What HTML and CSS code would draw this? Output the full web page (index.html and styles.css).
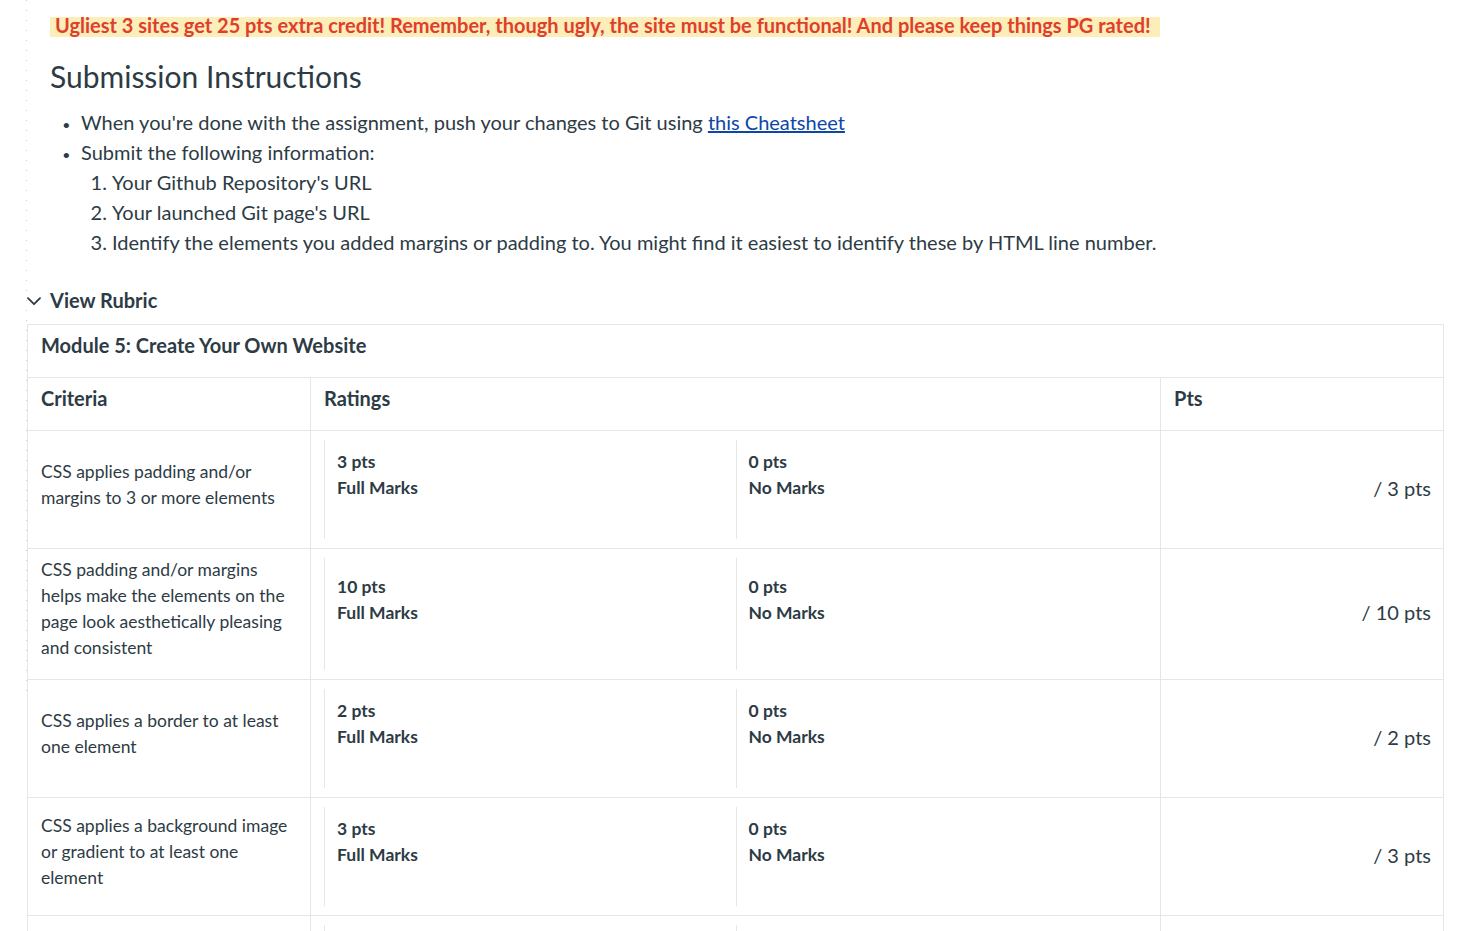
FILE: index.html
```html
<!DOCTYPE html>
<html lang="en">
<head>
<meta charset="utf-8">
<title>Module 5: Create Your Own Website</title>
<link rel="stylesheet" href="styles.css">
</head>
<body>
<div class="page">
  <div class="desc">
    <p class="notice"><span class="hl"><strong class="red">Ugliest 3 sites get 25 pts extra credit! Remember, though ugly, the site must be functional! And please keep things PG rated!</strong></span></p>
    <h2 class="title">Submission Instructions</h2>
    <ul class="bullets">
      <li>When you're done with the assignment, push your changes to Git using <a href="#" class="link">this Cheatsheet</a></li>
      <li>Submit the following information:
        <ol class="steps">
          <li>Your Github Repository's URL</li>
          <li>Your launched Git page's URL</li>
          <li>Identify the elements you added margins or padding to. You might find it easiest to identify these by HTML line number.</li>
        </ol>
      </li>
    </ul>
  </div>

  <div class="toggle">
    <svg class="chev" width="14" height="9" viewBox="0 0 14 9" aria-hidden="true"><path d="M1 1.2 L7 7.2 L13 1.2" fill="none" stroke="#2d3b45" stroke-width="1.8" stroke-linecap="round" stroke-linejoin="round"/></svg>
    <span class="toggle-text">View Rubric</span>
  </div>

  <div class="rubric">
    <div class="cell cell-title">Module 5: Create Your Own Website</div>

    <div class="cell cell-head">Criteria</div>
    <div class="cell cell-head">Ratings</div>
    <div class="cell cell-head">Pts</div>

    <div class="cell crit">CSS applies padding and/or margins to 3 or more elements</div>
    <div class="cell ratings">
      <div class="tier"><div class="tier-pts">3 pts</div><div class="tier-desc">Full Marks</div><div class="tier-long"></div></div>
      <div class="tier"><div class="tier-pts">0 pts</div><div class="tier-desc">No Marks</div><div class="tier-long"></div></div>
    </div>
    <div class="cell pts">/ 3 pts</div>

    <div class="cell crit">CSS padding and/or margins helps make the elements on the page look aesthetically pleasing and consistent</div>
    <div class="cell ratings">
      <div class="tier"><div class="tier-pts">10 pts</div><div class="tier-desc">Full Marks</div><div class="tier-long"></div></div>
      <div class="tier"><div class="tier-pts">0 pts</div><div class="tier-desc">No Marks</div><div class="tier-long"></div></div>
    </div>
    <div class="cell pts">/ 10 pts</div>

    <div class="cell crit">CSS applies a border to at least one element</div>
    <div class="cell ratings">
      <div class="tier"><div class="tier-pts">2 pts</div><div class="tier-desc">Full Marks</div><div class="tier-long"></div></div>
      <div class="tier"><div class="tier-pts">0 pts</div><div class="tier-desc">No Marks</div><div class="tier-long"></div></div>
    </div>
    <div class="cell pts">/ 2 pts</div>

    <div class="cell crit">CSS applies a background image or gradient to at least one element</div>
    <div class="cell ratings">
      <div class="tier"><div class="tier-pts">3 pts</div><div class="tier-desc">Full Marks</div><div class="tier-long"></div></div>
      <div class="tier"><div class="tier-pts">0 pts</div><div class="tier-desc">No Marks</div><div class="tier-long"></div></div>
    </div>
    <div class="cell pts">/ 3 pts</div>

    <div class="cell crit crit-empty"></div>
    <div class="cell ratings">
      <div class="tier tier-empty"></div>
      <div class="tier tier-empty"></div>
    </div>
    <div class="cell pts"></div>
  </div>
</div>
</body>
</html>
```

FILE: styles.css
```css
html, body {
  overflow: hidden;
}

body {
  margin: 0;
  background: #ffffff;
  color: #2d3b45;
  font-family: Lato, "Noto Sans", "Liberation Sans", sans-serif;
}

.page {
  padding: 10px 0 0 27px;
  background-image: repeating-linear-gradient(to bottom, #c9c9c9 0 1px, transparent 1px 10px);
  background-size: 1px 700px;
  background-position: 26px 0;
  background-repeat: no-repeat;
}

.desc {
  padding-left: 23px;
}

.notice {
  margin: 0;
  font-size: 20px;
  line-height: 30px;
}

.hl {
  background: #fbeeb8;
  font-size: 16.5px;
  padding: 0 9px 0 5px;
}

.red {
  color: #e03e2d;
  font-size: 20px;
  font-weight: 700;
}

.title {
  margin: 12px 0 8px;
  font-size: 30px;
  line-height: 45px;
  font-weight: 400;
  color: #2d3b45;
}

.bullets {
  margin: 0;
  padding-left: 31px;
  font-size: 20px;
  line-height: 30px;
}

.bullets > li::marker {
  content: "\2022\2002\00a0";
  font-size: 14px;
}

.steps {
  margin: 0;
  padding-left: 31px;
  list-style-type: decimal;
}

.steps > li::marker {
  font-size: 20px;
}

.link {
  color: #0b46a8;
  text-decoration: underline;
}

.toggle {
  margin-top: 28px;
  display: flex;
  align-items: center;
  gap: 9px;
  height: 30px;
}

.chev {
  display: block;
  margin-top: 2px;
}

.toggle-text {
  font-size: 20px;
  font-weight: 700;
  line-height: 30px;
}

.rubric {
  margin-top: 9px;
  width: 1417px;
  box-sizing: border-box;
  display: grid;
  grid-template-columns: 283px 850px 283px;
  border-left: 1px solid #e6e6e6;
  border-top: 1px solid #e6e6e6;
}

.cell {
  box-sizing: border-box;
  border-right: 1px solid #e6e6e6;
  border-bottom: 1px solid #e6e6e6;
  font-size: 17.5px;
  line-height: 26px;
}

.cell-title {
  grid-column: 1 / -1;
  padding: 5px 14px 17px 13px;
  font-size: 20px;
  line-height: 30px;
  font-weight: 700;
}

.cell-head {
  padding: 5px 13px 17px;
  font-size: 20px;
  line-height: 30px;
  font-weight: 700;
}

.crit {
  padding: 8px 13px 18px;
  display: flex;
  align-items: center;
}

.ratings {
  padding: 9px 13px;
  display: flex;
}

.tier {
  flex: 1 1 0;
  min-width: 0;
  border-left: 1px solid #e6e6e6;
  padding: 9px 12px 8px;
  display: flex;
  flex-direction: column;
  justify-content: center;
}

.tier-empty {
  min-height: 99px;
}

.tier-pts,
.tier-desc {
  font-weight: 700;
}

.tier-long {
  height: 30px;
}

.pts {
  padding: 6px 12px 10px;
  display: flex;
  align-items: center;
  justify-content: flex-end;
  font-size: 20px;
  line-height: 30px;
}
```
